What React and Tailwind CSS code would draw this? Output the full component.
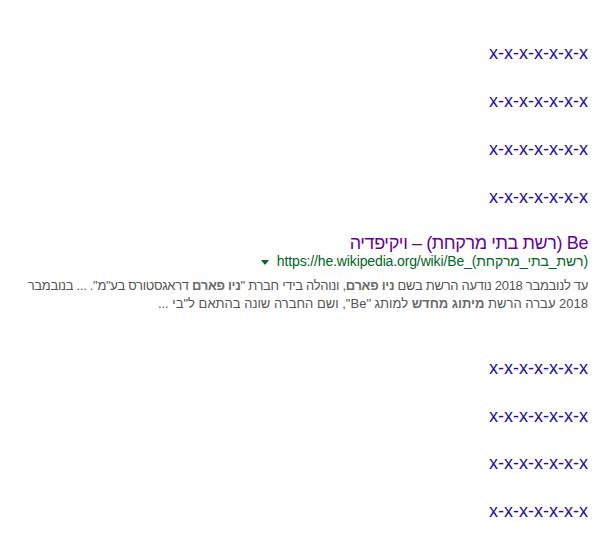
const links = ["x-x-x-x-x-x-x", "x-x-x-x-x-x-x", "x-x-x-x-x-x-x", "x-x-x-x-x-x-x"];

const LinkRow = ({ text }) => (
  <div className="h-[22px] leading-[22px]">
    <a href="#" className="text-[18px] text-[#1a0dab] no-underline">{text}</a>
  </div>
);

export default function App() {
  return (
    <div dir="rtl" className="w-[610px] h-[542px] bg-white pr-[22px] pt-[42px] font-['Liberation_Sans',Arial,sans-serif] overflow-hidden">
      <div className="flex flex-col gap-[26px]">
        {links.map((t, i) => <LinkRow key={i} text={t} />)}
      </div>

      {/* search result */}
      <div className="mt-[25px]">
        <h3 className="text-[18px] leading-[20px] text-[#660099] font-normal tracking-[-0.4px]">
          <a href="#">Be (רשת בתי מרקחת) – ויקיפדיה</a>
        </h3>
        <div className="flex items-center h-[18px] mt-[-1px]">
          <cite dir="ltr" className="not-italic text-[14px] leading-[18px] text-[#006621] tracking-[-0.13px]">https://he.wikipedia.org/wiki/Be_(רשת_בתי_מרקחת)</cite>
          <span className="mr-[8px] mt-[2px] w-0 h-0 border-l-[4px] border-r-[4px] border-t-[5px] border-l-transparent border-r-transparent border-t-[#006621]" />
        </div>
        <div className="mt-[7px] text-[13px] leading-[18px] text-[#545454] whitespace-nowrap">
          <span className="tracking-[-0.3px]">
            עד לנובמבר 2018 נודעה הרשת בשם <b className="text-[#6a6a6a]">ניו פארם</b>, ונוהלה בידי חברת "<b className="text-[#6a6a6a]">ניו פארם</b> דראגסטורס בע"מ". ... בנובמבר
          </span>
          <br />
          2018 עברה הרשת <b className="text-[#6a6a6a]">מיתוג מחדש</b> למותג "Be", ושם החברה שונה בהתאם ל"בי ...
        </div>
      </div>

      <div className="mt-[44px] flex flex-col gap-[25.5px]">
        {links.map((t, i) => <LinkRow key={i} text={t} />)}
      </div>
    </div>
  );
}
